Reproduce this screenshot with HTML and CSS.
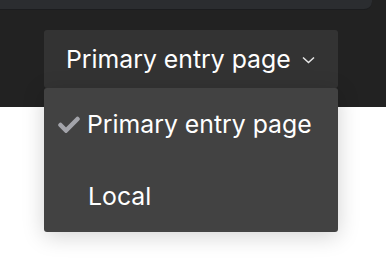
FILE: index.html
```html
<!DOCTYPE html>
<html lang="en">
<head>
    <meta charset="UTF-8">
    <title>Entry page picker</title>
    <link rel="stylesheet" href="styles.css">
</head>
<body>

    <div class="header">
        <div class="toolbar"></div>
        <div class="picker">
            <button class="picker-button">
                Primary entry page
                <svg class="chevron" width="13" height="8" viewBox="0 0 13 8"><path d="M1 1.5 L6.5 6.5 L12 1.5" fill="none" stroke="#e8e8e8" stroke-width="1.5"/></svg>
            </button>
            <ul class="menu">
                <li class="menu-item selected">
                    <svg class="check" width="22" height="17" viewBox="0 0 22 17"><path d="M2.5 9 L8 14.5 L19.5 3" fill="none" stroke="#a3a4aa" stroke-width="4.5" stroke-linecap="round"/></svg>
                    Primary entry page
                </li>
                <li class="menu-item">Local</li>
            </ul>
        </div>
    </div>
    <div class="content"></div>

</body>
</html>
```

FILE: styles.css
```css
html, body {
    height: 100%;
}
body {
    margin: 0;
    background: #fff;
    font-family: Inter, 'Noto Sans', sans-serif;
}
.header {
    background: #222222;
    height: 107px;
}
.toolbar {
    height: 9px;
    margin-right: 14px;
    background: #2b2d30;
    border-bottom: 1px solid #1c1d1f;
    border-bottom-right-radius: 8px;
}
.picker {
    position: relative;
    z-index: 2;
    margin: 20px 0 0 44px;
    width: 294px;
}
.picker-button {
    display: flex;
    align-items: center;
    width: 100%;
    height: 58px;
    padding: 0 0 0 22px;
    border: none;
    border-radius: 3px;
    background: #333333;
    color: #fff;
    font-family: inherit;
    font-size: 24.8px;
    cursor: pointer;
}
.chevron {
    margin-left: 11px;
    margin-top: 2px;
}
.menu {
    position: absolute;
    top: 58px;
    left: 0;
    width: 100%;
    margin: 0;
    padding: 0;
    list-style: none;
    background: #424242;
    border-radius: 3px;
    box-shadow: 0 4px 22px rgba(0, 0, 0, 0.18);
}
.menu-item {
    display: flex;
    align-items: center;
    height: 72px;
    padding-left: 44px;
    color: #fff;
    font-size: 24.8px;
}
.menu-item.selected {
    padding-left: 14px;
}
.check {
    margin-right: 7px;
}
.content {
    height: 155px;
}
```
